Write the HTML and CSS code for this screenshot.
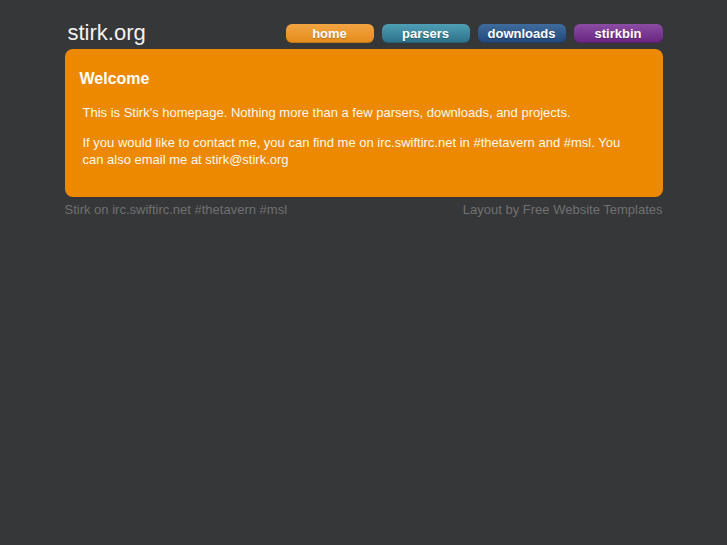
FILE: index.html
```html
<!DOCTYPE html>
<html>
<head>
<meta charset="utf-8">
<title>stirk.org</title>
<link rel="stylesheet" href="styles.css">
</head>
<body>
<div class="wrap">
  <div class="header">
    <div class="logo">stirk.org</div>
    <ul class="nav">
      <li><a class="btn home" href="#">home</a></li>
      <li><a class="btn parsers" href="#">parsers</a></li>
      <li><a class="btn downloads" href="#">downloads</a></li>
      <li><a class="btn stirkbin" href="#">stirkbin</a></li>
    </ul>
  </div>
  <div class="box">
    <h2>Welcome</h2>
    <p>This is Stirk's homepage. Nothing more than a few parsers, downloads, and projects.</p>
    <p>If you would like to contact me, you can find me on irc.swiftirc.net in #thetavern and #msl. You can also email me at stirk@stirk.org</p>
  </div>
  <div class="footer">
    <span>Stirk on irc.swiftirc.net #thetavern #msl</span>
    <span>Layout by Free Website Templates</span>
  </div>
</div>
</body>
</html>
```
FILE: styles.css
```css
html, body {
  margin: 0;
  padding: 0;
  background: #363739;
  font-family: "Liberation Sans", Arial, sans-serif;
}
.wrap {
  width: 598px;
  margin: 0 auto;
  padding-top: 20px;
}
.header {
  display: flex;
  justify-content: space-between;
  align-items: flex-start;
  height: 29px;
}
.logo {
  color: #f2f2f2;
  font-size: 22px;
  line-height: 26px;
  margin-left: 3px;
}
.nav {
  list-style: none;
  margin: 4px 0 0;
  padding: 0;
  display: flex;
  gap: 8px;
}
.btn {
  display: block;
  width: 88px;
  height: 19px;
  line-height: 19px;
  border-radius: 6px;
  text-align: center;
  color: #fff;
  font-weight: bold;
  font-size: 13px;
  text-decoration: none;
  text-shadow: 0 1px 1px rgba(0,0,0,0.25);
  box-shadow: inset 0 -1px 0 rgba(0,0,0,0.15);
}
.stirkbin { width: 89px; }
.home { background: linear-gradient(#f2a443, #e48c18); }
.parsers { background: linear-gradient(#4f9fb5, #2b7089); }
.downloads { background: linear-gradient(#3e6c9d, #22477a); }
.stirkbin { background: linear-gradient(#8b4ca3, #682580); }
.box {
  background: #ec8900;
  border-radius: 8px;
  padding: 20px 15px 16px;
  color: #fff;
}
.box h2 {
  margin: 0 0 16px;
  font-size: 16px;
  line-height: 19px;
  font-weight: bold;
}
.box p {
  margin: 0 15px 13px 3px;
  font-size: 13px;
  line-height: 17px;
  color: #fff8ee;
}
.footer {
  display: flex;
  justify-content: space-between;
  margin-top: 5px;
  font-size: 13px;
  line-height: 16px;
  color: #707070;
}
```
